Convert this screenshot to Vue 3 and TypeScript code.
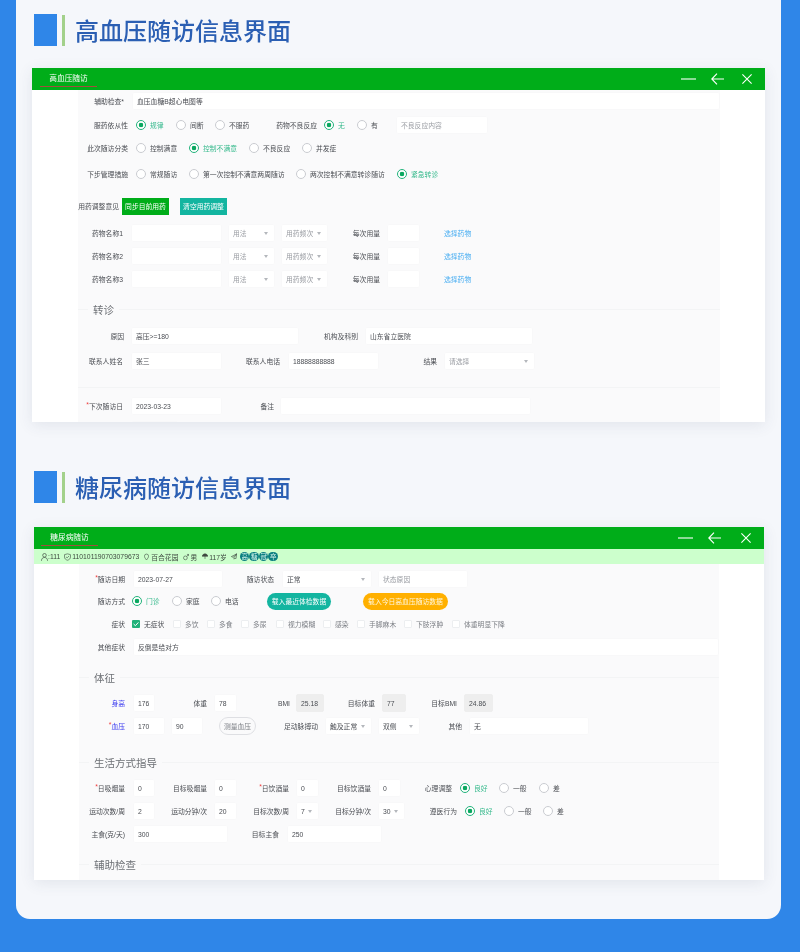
<script setup lang="ts">
import { computed } from 'vue'

type Kind = 'label' | 'input' | 'select' | 'static' | 'radio' | 'check' | 'link' | 'btn'

interface Cell {
  kind: Kind
  text: string
  x: number
  end: number
  on?: boolean
  req?: boolean
  blue?: boolean
  hint?: boolean
  tone?: string
}

interface Row {
  y: number
  section?: string
  line?: boolean
  cells?: Cell[]
}

const FIELD_H = 18

const L = (text: string, x: number, end: number, opts: Partial<Cell> = {}): Cell => ({ kind: 'label', text, x, end, ...opts })
const I = (text: string, x: number, end: number, hint = false): Cell => ({ kind: 'input', text, x, end, hint })
const S = (text: string, x: number, end: number, hint = false): Cell => ({ kind: 'select', text, x, end, hint })
const D = (text: string, x: number, end: number): Cell => ({ kind: 'static', text, x, end })
const R = (text: string, x: number, end: number, on = false): Cell => ({ kind: 'radio', text, x, end, on })
const C = (text: string, x: number, end: number, on = false): Cell => ({ kind: 'check', text, x, end, on })
const B = (text: string, x: number, end: number, tone: string): Cell => ({ kind: 'btn', text, x, end, tone })

function medRow(y: number, n: number): Row {
  return {
    y,
    cells: [
      L(`药物名称${n}`, 90, 123),
      I('', 131, 222),
      S('用法', 228, 275, true),
      S('用药频次', 281, 328, true),
      L('每次用量', 350, 380),
      I('', 387, 420),
      { kind: 'link', text: '选择药物', x: 444, end: 474 }
    ]
  }
}

const hypertensionRows: Row[] = [
  { y: 101, cells: [L('辅助检查*', 90, 124), I('血压血糖B超心电图等', 132, 720)] },
  {
    y: 124.5,
    cells: [
      L('服药依从性', 90, 128),
      R('规律', 136, 166, true), R('间断', 176, 206), R('不服药', 215, 252),
      L('药物不良反应', 272, 317),
      R('无', 324, 348, true), R('有', 357, 381),
      I('不良反应内容', 396, 488, true)
    ]
  },
  {
    y: 148,
    cells: [
      L('此次随访分类', 84, 128),
      R('控制满意', 136, 179), R('控制不满意', 189, 239, true), R('不良反应', 249, 292), R('并发症', 302, 339)
    ]
  },
  {
    y: 174,
    cells: [
      L('下步管理措施', 84, 128),
      R('常规随访', 136, 179), R('第一次控制不满意两周随访', 189, 286),
      R('两次控制不满意转诊随访', 296, 387), R('紧急转诊', 397, 440, true)
    ]
  },
  {
    y: 205.5,
    cells: [
      L('用药调整意见', 78, 119),
      B('同步目前用药', 122, 169, 'green'),
      B('清空用药调整', 180, 227, 'teal')
    ]
  },
  medRow(232.5, 1),
  medRow(256, 2),
  medRow(279, 3),
  { y: 309, section: '转诊' },
  {
    y: 335.5,
    cells: [L('原因', 100, 124), I('高压>=180', 131, 299), L('机构及科别', 320, 358), I('山东省立医院', 365, 533)]
  },
  {
    y: 361,
    cells: [
      L('联系人姓名', 86, 123), I('张三', 131, 222),
      L('联系人电话', 243, 280), I('18888888888', 288, 379),
      L('结果', 410, 437), S('请选择', 444, 535, true)
    ]
  },
  { y: 387, line: true },
  { y: 406, cells: [L('下次随访日', 84, 123, { req: true }), I('2023-03-23', 131, 222), L('备注', 250, 274), I('', 280, 531)] },
  { y: 430, cells: [I('', 131, 179)] }
]

const diabetesRows: Row[] = [
  {
    y: 578.5,
    cells: [
      L('随访日期', 90, 125, { req: true }), I('2023-07-27', 133, 223),
      L('随访状态', 240, 274), S('正常', 282, 372), I('状态原因', 378, 468, true)
    ]
  },
  {
    y: 601,
    cells: [
      L('随访方式', 90, 125),
      R('门诊', 132, 162, true), R('家庭', 172, 202), R('电话', 211, 241),
      B('载入最近体检数据', 267, 331, 'pill-teal'),
      B('载入今日高血压随访数据', 363, 448, 'pill-amber')
    ]
  },
  {
    y: 623.5,
    cells: [
      L('症状', 100, 125),
      C('无症状', 132, 166, true), C('多饮', 173, 200), C('多食', 207, 234), C('多尿', 241, 268),
      C('视力模糊', 276, 316), C('感染', 323, 351), C('手脚麻木', 357, 398), C('下肢浮肿', 404, 445), C('体重明显下降', 452, 506)
    ]
  },
  { y: 647, cells: [L('其他症状', 90, 125), I('反倒是给对方', 133, 719)] },
  { y: 677, section: '体征' },
  {
    y: 703,
    cells: [
      L('身高', 100, 125, { blue: true }), I('176', 133, 155),
      L('体重', 185, 207), I('78', 214, 237),
      L('BMI', 265, 290), D('25.18', 296, 324),
      L('目标体重', 340, 375), D('77', 382, 406),
      L('目标BMI', 425, 457), D('24.86', 464, 493)
    ]
  },
  {
    y: 726,
    cells: [
      L('血压', 100, 125, { blue: true, req: true }), I('170', 133, 165), I('90', 171, 203),
      B('测量血压', 219, 256, 'outline'),
      L('足动脉搏动', 280, 318), S('触及正常', 325, 372), S('双侧', 378, 420),
      L('其他', 440, 462), I('无', 469, 589)
    ]
  },
  { y: 762, section: '生活方式指导' },
  {
    y: 788,
    cells: [
      L('日吸烟量', 90, 125, { req: true }), I('0', 133, 155),
      L('目标吸烟量', 170, 207), I('0', 214, 237),
      L('日饮酒量', 250, 289, { req: true }), I('0', 296, 319),
      L('目标饮酒量', 330, 371), I('0', 378, 401),
      L('心理调整', 415, 452),
      R('良好', 460, 489, true), R('一般', 499, 529), R('差', 539, 562)
    ]
  },
  {
    y: 811,
    cells: [
      L('运动次数/周', 85, 125), I('2', 133, 155),
      L('运动分钟/次', 165, 207), I('20', 214, 237),
      L('目标次数/周', 248, 289), S('7', 296, 319),
      L('目标分钟/次', 330, 371), S('30', 378, 405),
      L('遵医行为', 420, 457),
      R('良好', 465, 494, true), R('一般', 504, 534), R('差', 543, 566)
    ]
  },
  {
    y: 834,
    cells: [L('主食(克/天)', 85, 125), I('300', 133, 228), L('目标主食', 245, 279), I('250', 287, 382)]
  },
  { y: 864.5, section: '辅助检查' }
]

/** ページ座標のデータを行・セルの余白に変換 */
function flowRows(rows: Row[], originX: number, originY: number) {
  let bottom = originY
  return rows.map((row) => {
    const h = row.cells ? FIELD_H : 1
    const top = Math.round(row.y - h / 2)
    const marginTop = top - bottom
    bottom = top + h
    let right = originX
    const cells = (row.cells ?? []).map((cell) => {
      const style = { marginLeft: `${cell.x - right}px`, width: `${cell.end - cell.x}px` }
      right = cell.end
      return { ...cell, style }
    })
    return { ...row, cells, style: { marginTop: `${marginTop}px` } }
  })
}

const panels = computed(() => [
  { key: 'hypertension', heading: '高血压随访信息界面', tab: '高血压随访', strip: false, rows: flowRows(hypertensionRows, 78, 90) },
  { key: 'diabetes', heading: '糖尿病随访信息界面', tab: '糖尿病随访', strip: true, rows: flowRows(diabetesRows, 79, 564) }
])

const badges = ['高', '糖', '冠', '卒']
</script>

<template>
  <div class="page">
    <main class="panel">
      <section v-for="panel in panels" :key="panel.key" class="block" :class="panel.key">
        <h1 class="heading">
          <span class="heading-square"></span>
          <span class="heading-bar"></span>
          <span>{{ panel.heading }}</span>
        </h1>

        <div class="window">
          <header class="titlebar">
            <div class="tab">{{ panel.tab }}</div>
            <div class="controls">
              <svg width="15" height="12" viewBox="0 0 15 12"><path d="M0 6h15" /></svg>
              <svg width="13" height="12" viewBox="0 0 13 12"><path d="M13 6H.8M6 .6.8 6 6 11.4" /></svg>
              <svg width="10" height="10" viewBox="0 0 10 10"><path d="M.4.4l9.2 9.2M9.6.4.4 9.6" /></svg>
            </div>
          </header>

          <div v-if="panel.strip" class="strip">
            <svg class="person" width="7" height="8" viewBox="0 0 7 8"><circle cx="3.5" cy="2.3" r="1.8" /><path d="M.4 7.8c.2-2.2 1.3-3.3 3.1-3.3s2.9 1.1 3.1 3.3" /></svg>
            <span class="s-id">:111</span>
            <svg class="shield" width="7" height="8" viewBox="0 0 8 8"><path d="M4 .4 7.4 1.3V4C7.4 6 5.8 7.2 4 7.7 2.2 7.2.6 6 .6 4V1.3z" /><path d="M2.3 3.8 3.6 5l2.2-2.2" /></svg>
            <span class="s-card">110101190703079673</span>
            <svg class="pin" width="5" height="8" viewBox="0 0 6 8"><path d="M3 7.6C1.6 5.8.5 4.4.5 3a2.5 2.5 0 0 1 5 0c0 1.4-1.1 2.8-2.5 4.6z" /></svg>
            <span class="s-addr">百合花园</span>
            <svg class="male" width="6" height="8" viewBox="0 0 7 8"><circle cx="2.8" cy="5" r="2.2" /><path d="M4.4 3.4 6.5 1M4.6 1h1.9v1.9" /></svg>
            <span class="s-sex">男</span>
            <svg class="age" width="6" height="7" viewBox="0 0 7 7"><path d="M.2 3.2C.8 1.3 2 .4 3.5.4s2.7.9 3.3 2.8z" /><path d="M3.5 3v3.3" /></svg>
            <span class="s-age">117岁</span>
            <svg class="plane" width="6" height="7" viewBox="0 0 7 7"><path d="M6.7.4.4 3.6l2 .8L6.7.4 3.4 5l.2 1.6 1-1.2 1.3.5z" /></svg>
            <span class="badges">
              <span v-for="b in badges" :key="b" class="badge">{{ b }}</span>
            </span>
          </div>

          <div class="body">
            <div class="form">
              <template v-for="(row, i) in panel.rows" :key="i">
                <div v-if="row.section || row.line" class="divider" :style="row.style">
                  <span v-if="row.section" class="divider-title">{{ row.section }}</span>
                </div>
                <div v-else class="row" :style="row.style">
                  <template v-for="(cell, j) in row.cells" :key="j">
                    <label v-if="cell.kind === 'label'" class="label" :class="{ blue: cell.blue }" :style="cell.style">
                      <span v-if="cell.req" class="req">*</span><span>{{ cell.text }}</span>
                    </label>
                    <div v-else-if="cell.kind === 'input'" class="field" :class="{ hint: cell.hint }" :style="cell.style">{{ cell.text }}</div>
                    <div v-else-if="cell.kind === 'static'" class="field readonly" :style="cell.style">{{ cell.text }}</div>
                    <div v-else-if="cell.kind === 'select'" class="field select" :class="{ hint: cell.hint }" :style="cell.style">
                      <span>{{ cell.text }}</span><i class="caret"></i>
                    </div>
                    <div v-else-if="cell.kind === 'radio'" class="radio" :class="{ on: cell.on }" :style="cell.style">
                      <i class="radio-dot"></i><span>{{ cell.text }}</span>
                    </div>
                    <div v-else-if="cell.kind === 'check'" class="check" :class="{ on: cell.on }" :style="cell.style">
                      <i class="check-box">
                        <svg v-if="cell.on" width="8" height="8" viewBox="0 0 8 8"><path d="M1.6 4 3.4 5.7 6.4 2.4" /></svg>
                      </i>
                      <span>{{ cell.text }}</span>
                    </div>
                    <a v-else-if="cell.kind === 'link'" class="link" :style="cell.style">{{ cell.text }}</a>
                    <button v-else class="btn" :class="cell.tone" :style="cell.style">{{ cell.text }}</button>
                  </template>
                </div>
              </template>
            </div>
          </div>
        </div>
      </section>
    </main>
  </div>
</template>

<style>
html,
body {
  margin: 0;
  background: #2f86e8;
}
</style>

<style scoped>
.page {
  width: 800px;
  height: 952px;
  overflow: hidden;
  background: #2f86e8;
  padding: 0 19px 33px 16px;
  box-sizing: border-box;
  font-family: "Liberation Sans", "Noto Sans CJK SC", sans-serif;
  font-size: 6.8px;
  color: #4a4d53;
}

.panel {
  height: 919px;
  padding-top: 14px;
  box-sizing: border-box;
  background: #f5f7fb;
  border-radius: 0 0 14px 14px;
}

.heading {
  display: flex;
  align-items: center;
  height: 32px;
  margin: 0 0 0 18px;
  font-size: 24px;
  font-weight: 500;
  line-height: 32px;
  color: #2b5fb3;
  font-family: "Noto Sans CJK SC", sans-serif;
  filter: blur(0.3px);
}

.heading-square {
  width: 23px;
  height: 32px;
  background: #2f86e8;
}

.heading-bar {
  width: 3px;
  height: 31px;
  margin: 1px 10px 0 5px;
  background: #a3d18b;
}

.diabetes {
  margin-top: 49px;
}

.window {
  margin: 22px 0 0 16px;
  width: 733px;
  height: 354px;
  overflow: hidden;
  background: #fff;
  box-shadow: 0 3px 14px rgba(60, 70, 100, 0.1);
}

.diabetes .window {
  margin: 24px 0 0 18px;
  width: 730px;
  height: 353px;
}

.titlebar {
  display: flex;
  align-items: flex-start;
  height: 22px;
  background: #00ad19;
  color: #fff;
}

.tab {
  width: 57px;
  height: 18px;
  margin-left: 8px;
  border-bottom: 1px solid #a0503c;
  font-size: 7.7px;
  line-height: 21px;
  text-align: center;
  filter: blur(0.3px);
}

.diabetes .tab {
  margin-left: 7px;
}

.controls {
  display: flex;
  align-items: center;
  gap: 15px;
  height: 22px;
  margin-left: auto;
  padding-right: 13px;
}

.controls svg:last-child {
  margin-left: 3px;
}

.diabetes .controls svg:last-child {
  margin-left: 5px;
}

.controls path {
  fill: none;
  stroke: #fff;
  stroke-width: 1.1;
}

.strip {
  display: flex;
  align-items: center;
  height: 15px;
  padding-left: 7px;
  background: #ccffcc;
  color: #3f4a41;
  filter: blur(0.25px);
}

.strip svg {
  flex-shrink: 0;
  fill: none;
  stroke: #3f4a41;
  stroke-width: 0.7;
}

.s-card {
  margin-left: 1px;
}

.shield {
  margin-left: 4px;
}

.pin {
  margin-left: 5px;
}

.s-addr {
  margin-left: 2px;
}

.male {
  margin-left: 5px;
}

.s-sex {
  margin-left: 1px;
}

.strip .age {
  margin-left: 5px;
  fill: #3f4a41;
}

.s-age {
  margin-left: 1px;
}

.plane {
  margin-left: 4px;
}

.badges {
  display: flex;
  margin-left: 3px;
}

.badge {
  width: 9.5px;
  height: 9.5px;
  border-radius: 50%;
  background: #0b7f80;
  color: #d8f5ee;
  font-size: 6.5px;
  line-height: 9.5px;
  text-align: center;
}

.body {
  height: 100%;
  padding-left: 46px;
  box-sizing: border-box;
}

.diabetes .body {
  padding-left: 45px;
}

.form {
  width: 642px;
  height: 340px;
  display: flow-root;
  background: #fafafb;
}

.diabetes .form {
  width: 640px;
}

.row {
  display: flex;
  align-items: center;
  height: 18px;
  white-space: nowrap;
  filter: blur(0.25px);
}

.row > * {
  flex-shrink: 0;
  box-sizing: border-box;
}

.label {
  display: flex;
  justify-content: flex-end;
}

.label.blue {
  color: #3a3af0;
}

.req {
  color: #f04040;
}

.field {
  display: flex;
  align-items: center;
  height: 18px;
  padding-left: 4px;
  background: #fff;
  border: 1px solid #f8f8f9;
  border-radius: 2px;
}

.field.hint {
  color: #9a9da3;
}

.field.readonly {
  background: #eeeeee;
  border-color: #eeeeee;
}

.select {
  justify-content: space-between;
  padding-right: 6px;
}

.caret {
  width: 0;
  height: 0;
  border-left: 2.5px solid transparent;
  border-right: 2.5px solid transparent;
  border-top: 3px solid #b4b7bc;
}

.radio,
.check {
  display: flex;
  align-items: center;
  gap: 4px;
}

.radio-dot {
  flex-shrink: 0;
  width: 10px;
  height: 10px;
  box-sizing: border-box;
  border: 1px solid #c9cbd0;
  border-radius: 50%;
  background: #fff;
}

.radio.on {
  color: #35b98c;
}

.radio.on .radio-dot {
  border-color: #20b27a;
  background: radial-gradient(circle, #0aa860 0 2px, #fff 2.6px);
}

.check-box {
  flex-shrink: 0;
  display: block;
  width: 8px;
  height: 8px;
  box-sizing: border-box;
  border: 1px solid #eceef0;
  border-radius: 1px;
  background: #fff;
}

.check.on .check-box {
  border: 0;
  background: #20b27a;
}

.check-box svg {
  display: block;
  fill: none;
  stroke: #fff;
  stroke-width: 1;
}

.check {
  color: #7c7f85;
}

.check.on {
  color: #4a4d53;
}

.link {
  color: #4aaef2;
}

.btn {
  height: 17px;
  padding: 0;
  border: 0;
  font: inherit;
  color: #fff;
  white-space: nowrap;
}

.btn.green {
  background: #00ad19;
}

.btn.teal {
  background: #13b5a0;
}

.btn.pill-teal,
.btn.pill-amber,
.btn.outline {
  border-radius: 9px;
}

.btn.pill-teal {
  background: #13b5a0;
}

.btn.pill-amber {
  background: #ffb000;
  color: #fff8e0;
}

.btn.outline {
  height: 18px;
  background: #fafafb;
  border: 1px solid #dedfe3;
  color: #7c7f85;
}

.divider {
  position: relative;
  height: 1px;
  background: #f3f4f5;
}

.divider-title {
  position: absolute;
  left: 10px;
  top: -6px;
  padding: 0 5px;
  background: #fafafb;
  font-size: 10.5px;
  line-height: 14px;
  color: #6d7075;
  filter: blur(0.25px);
}
</style>
